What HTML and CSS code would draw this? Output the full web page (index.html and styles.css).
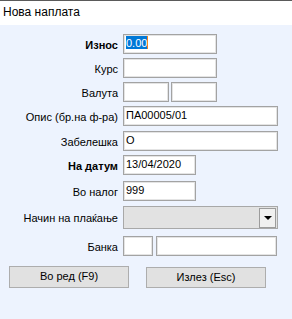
FILE: index.html
```html
<!DOCTYPE html>
<html lang="mk">
<head>
  <meta charset="UTF-8" />
  <title>Нова наплата</title>
  <link rel="stylesheet" href="styles.css">
</head>
<body>
  <div class="window">
    <div class="titlebar">Нова наплата</div>
    <div class="form">
      <div class="row">
        <label class="lbl bold">Износ</label>
        <div class="field w94"><span class="sel">0.00</span></div>
      </div>
      <div class="row">
        <label class="lbl">Курс</label>
        <div class="field w94"></div>
      </div>
      <div class="row">
        <label class="lbl">Валута</label>
        <div class="field w46"></div>
        <div class="field w46 gap2"></div>
      </div>
      <div class="row">
        <label class="lbl">Опис (бр.на ф-ра)</label>
        <div class="field w155">ПА00005/01</div>
      </div>
      <div class="row mt5">
        <label class="lbl">Забелешка</label>
        <div class="field w155">О</div>
      </div>
      <div class="row">
        <label class="lbl bold">На датум</label>
        <div class="field w73">13/04/2020</div>
      </div>
      <div class="row mt6">
        <label class="lbl">Во налог</label>
        <div class="field w73">999</div>
      </div>
      <div class="row mt5">
        <label class="lbl lbl-combo">Начин на плаќање</label>
        <div class="combo">
          <span class="combo-btn"><span class="arrow"></span></span>
        </div>
      </div>
      <div class="row mt7">
        <label class="lbl">Банка</label>
        <div class="field w30"></div>
        <div class="field w121 gap3"></div>
      </div>
      <div class="buttons">
        <button class="btn">Во ред (F9)</button>
        <button class="btn btn-exit">Излез (Esc)</button>
      </div>
    </div>
  </div>
</body>
</html>
```

FILE: styles.css
```css
body {
  margin: 0;
  background: #edf3fe;
  font-family: 'Liberation Sans', Arial, sans-serif;
  font-size: 11px;
  color: #000;
}
.window { width: 292px; height: 319px; display: flex; flex-direction: column; }
.titlebar {
  background: #fff;
  border-top: 1px solid #5a5a5a;
  height: 24px;
  padding-left: 3px;
  font-size: 12px;
  line-height: 22px;
}
.form { flex: 1; background: #edf3fe; padding-top: 9px; }
.row { display: flex; align-items: flex-start; margin-top: 4px; }
.row:first-child { margin-top: 0; }
.mt5 { margin-top: 5px; }
.mt6 { margin-top: 6px; }
.mt7 { margin-top: 7px; }
.lbl {
  width: 118px;
  height: 20px;
  margin-right: 5px;
  text-align: right;
  line-height: 18px;
  padding-top: 2px;
  box-sizing: border-box;
  white-space: nowrap;
}
.lbl-combo { height: 23px; line-height: 21px; }
.bold { font-weight: bold; }
.field {
  box-sizing: border-box;
  height: 20px;
  background: #fff;
  border: 1px solid #a3a3a3;
  box-shadow: inset 0 0 0 1px #e4e4e4;
  padding: 0 2px;
  line-height: 16px;
  white-space: nowrap;
}
.w94 { width: 94px; }
.w46 { width: 46px; }
.w155 { width: 155px; }
.w73 { width: 73px; }
.w30 { width: 30px; }
.w121 { width: 121px; }
.gap2 { margin-left: 2px; }
.gap3 { margin-left: 3px; }
.sel {
  background: #0078d7;
  color: #fff;
  border-right: 1px solid #f08020;
  padding: 1px 0 0;
  display: inline-block;
  line-height: 12px;
  margin-top: 1px;
}
.combo {
  box-sizing: border-box;
  width: 155px;
  height: 23px;
  background: #e2e2e2;
  border: 1px solid #a8a8a8;
  display: flex;
  justify-content: flex-end;
  padding: 1px 1px 0 0;
}
.combo-btn {
  box-sizing: border-box;
  width: 17px;
  height: 20px;
  background: #f0f0f0;
  border: 1px solid #9c9c9c;
  display: flex;
  align-items: center;
  justify-content: center;
}
.arrow {
  width: 0; height: 0;
  border-left: 4px solid transparent;
  border-right: 4px solid transparent;
  border-top: 4px solid #000;
}
.buttons { display: flex; gap: 17px; padding-left: 9px; margin-top: 10px; }
.btn {
  box-sizing: border-box;
  width: 120px;
  height: 22px;
  background: #e1e1e1;
  border: 1px solid #adadad;
  font-family: 'Liberation Sans', Arial, sans-serif;
  font-size: 11px;
  color: #000;
  padding: 0 0 2px;
}
.btn-exit { margin-top: 1px; height: 21px; }
```
